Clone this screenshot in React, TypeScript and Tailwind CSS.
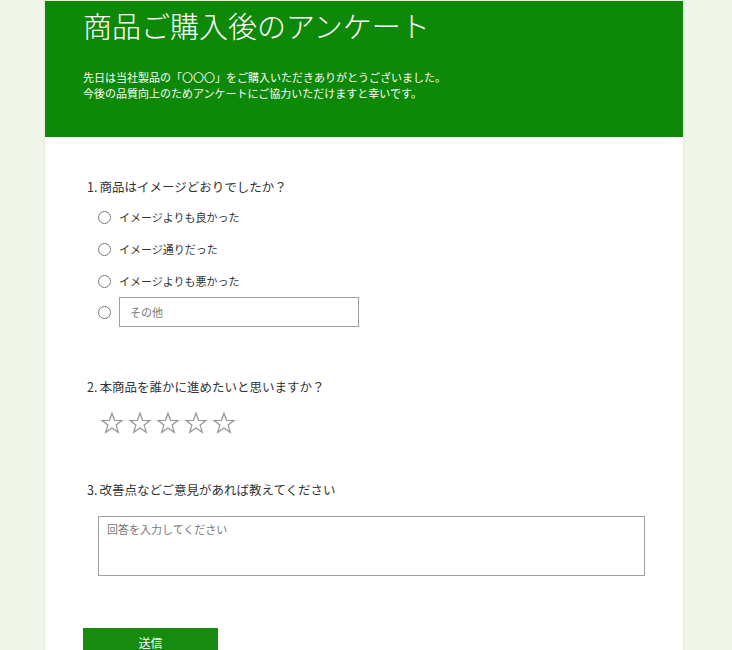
import React from "react";

const font = { fontFamily: '"Noto Sans CJK JP", "Noto Sans", sans-serif' };

function Star() {
  return (
    <svg width="24" height="24" viewBox="0 0 24 24" className="shrink-0">
      <path
        d="M12 2.2 L14.6 9.3 L22 9.5 L16.1 14.1 L18.3 21.3 L12 17 L5.7 21.3 L7.9 14.1 L2 9.5 L9.4 9.3 Z"
        fill="none"
        stroke="#9a9a9a"
        strokeWidth="1.3"
        strokeLinejoin="miter"
      />
    </svg>
  );
}

function Radio() {
  return <span className="block w-[13px] h-[13px] rounded-full border border-[#777] bg-white shrink-0" />;
}

export default function App() {
  return (
    <div className="min-h-[650px] w-[732px] bg-[#f1f6ea] overflow-hidden" style={font}>
      <div className="ml-[45px] w-[638px] bg-white shadow-[0_0_3px_rgba(0,0,0,0.12)] min-h-[650px]">
        <div className="bg-[#0d8807] h-[136px] mt-[1px] pl-[38px] pt-[3px]">
          <h1 className="text-white text-[29px] font-light leading-[42px]">商品ご購入後のアンケート</h1>
          <p className="text-white text-[11px] leading-[16px] mt-[23px]">
            先日は当社製品の「〇〇〇」をご購入いただきありがとうございました。
            <br />
            今後の品質向上のためアンケートにご協力いただけますと幸いです。
          </p>
        </div>

        <div className="pl-[42px] pt-[40px]">
          <div className="text-[12.5px] text-[#333] leading-[20px]">1.<span className="ml-[2px]">商品はイメージどおりでしたか？</span></div>
          <div className="pl-[11px] mt-[10px] flex flex-col">
            <label className="flex items-center gap-[8px] h-[20px]">
              <Radio />
              <span className="text-[11px] text-[#333]">イメージよりも良かった</span>
            </label>
            <label className="flex items-center gap-[8px] h-[20px] mt-[12px]">
              <Radio />
              <span className="text-[11px] text-[#333]">イメージ通りだった</span>
            </label>
            <label className="flex items-center gap-[8px] h-[20px] mt-[12px]">
              <Radio />
              <span className="text-[11px] text-[#333]">イメージよりも悪かった</span>
            </label>
            <div className="flex items-center gap-[8px] mt-[6px]">
              <Radio />
              <div className="w-[240px] h-[30px] border border-[#a0a0a0] flex items-center pl-[10px] text-[11px] text-[#777]">
                その他
              </div>
            </div>
          </div>

          <div className="text-[12.5px] text-[#333] leading-[20px] mt-[50px]">2.<span className="ml-[2px]">本商品を誰かに進めたいと思いますか？</span></div>
          <div className="flex gap-[4px] ml-[13px] mt-[14px]">
            <Star />
            <Star />
            <Star />
            <Star />
            <Star />
          </div>

          <div className="text-[12.5px] text-[#333] leading-[20px] mt-[45px]">3.<span className="ml-[2px]">改善点などご意見があれば教えてください</span></div>
          <div className="ml-[11px] mt-[16px] w-[547px] h-[60px] border border-[#a0a0a0] px-[8px] pt-[4px] text-[11px] text-[#777]">
            回答を入力してください
          </div>

          <button className="-ml-[4px] mt-[52px] w-[135px] h-[30px] bg-[#168b10] text-white text-[12px] flex items-center justify-center">
            送信
          </button>
        </div>
      </div>
    </div>
  );
}
